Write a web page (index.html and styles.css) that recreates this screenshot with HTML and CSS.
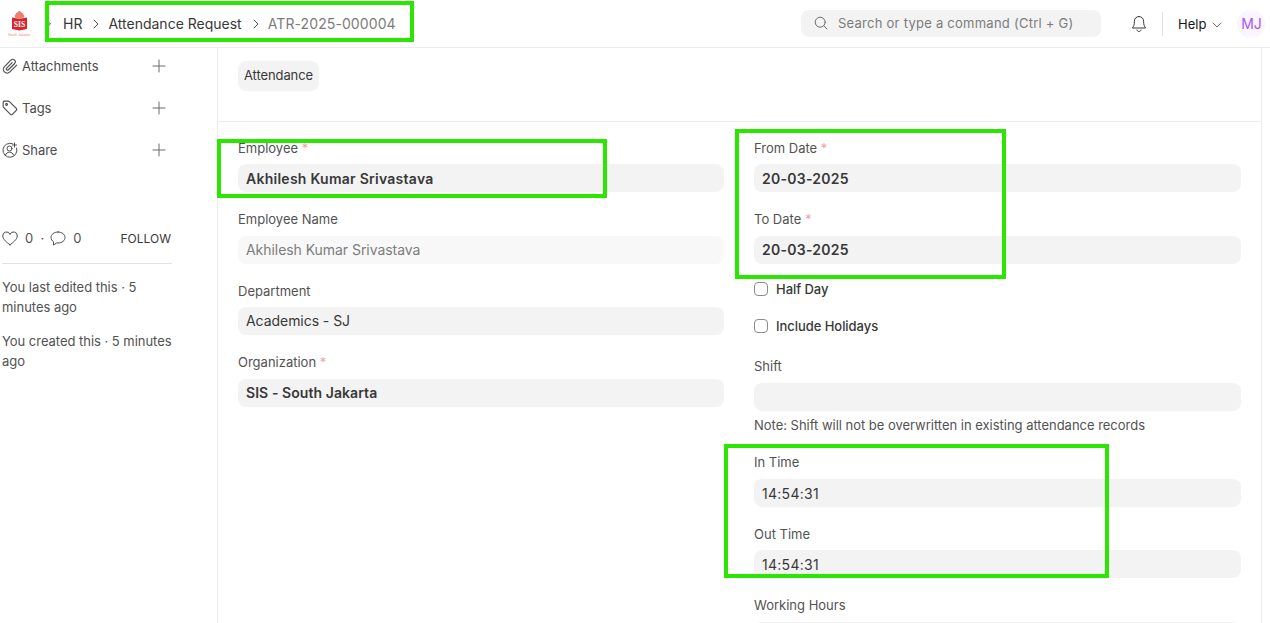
FILE: index.html
```html
<!DOCTYPE html>
<html lang="en">
<head>
<meta charset="utf-8">
<title>ATR-2025-000004</title>
<link rel="stylesheet" href="styles.css">
</head>
<body>
<header class="navbar">
  <div class="logo">
    <svg width="24" height="27" viewBox="0 0 24 27">
      <path d="M11.500 1c-1 0-1.500.8-2 1.500-1.200 0-2 1-1.800 2-1.200.5-1.400 1.800-.7 3l4.500 1 4.500-1c.7-1.200.5-2.500-.7-3 .2-1-.6-2-1.800-2C13 1.800 12.500 1 11.500 1z" fill="#ee7f6c"/>
      <path d="M4 7.500l7.500 1.200L19 7.500v11.500l-7.500 1.500L4 19z" fill="#d8262c"/>
      <text x="11.500" y="16.500" class="logo-mark">SIS</text>
      <text x="11" y="26" class="logo-sub">South Jakarta</text>
    </svg>
  </div>
  <nav class="crumbs">
    <svg class="crumb-sep first" width="6" height="8" viewBox="0 0 6 8"><path d="M1.500 1l3 3-3 3" class="stroke-dark"/></svg>
    <span class="crumb">HR</span>
    <svg class="crumb-sep" width="6" height="10" viewBox="0 0 6 10"><path d="M1 1l4 4-4 4" class="stroke-dark"/></svg>
    <span class="crumb">Attendance Request</span>
    <svg class="crumb-sep" width="6" height="10" viewBox="0 0 6 10"><path d="M1 1l4 4-4 4" class="stroke-dark"/></svg>
    <span class="crumb muted">ATR-2025-000004</span>
  </nav>
  <div class="search">
    <svg width="14" height="14" viewBox="0 0 14 14"><circle cx="6.200" cy="6.200" r="5" class="stroke-gray"/><path d="M10 10l3 3" class="stroke-gray"/></svg>
    <span>Search or type a command (Ctrl + G)</span>
  </div>
  <svg class="bell" width="16" height="18" viewBox="0 0 16 18"><path d="M8 1.500c-2.800 0-4.600 2.100-4.600 4.800 0 3.700-.9 5.200-2 6.700h13.200c-1.100-1.500-2-3-2-6.700C12.600 3.600 10.800 1.500 8 1.500z" class="stroke-ink"/><path d="M6 15c.3 1 1 1.500 2 1.500s1.700-.5 2-1.500" class="stroke-ink"/></svg>
  <span class="nav-divider"></span>
  <span class="help">Help</span>
  <svg class="help-caret" width="10" height="6" viewBox="0 0 10 6"><path d="M1 1l4 4 4-4" class="stroke-gray"/></svg>
  <span class="avatar">MJ</span>
</header>

<div class="page">
  <aside class="sidebar">
    <div class="side-row">
      <span class="side-label">
        <svg width="16" height="16" viewBox="2 1 14 14"><path d="M14.800 7.300l-5.900 5.900a3.300 3.300 0 0 1-4.700-4.700l5.800-5.800a2.200 2.200 0 0 1 3.100 3.100L7.400 11.500a1.100 1.100 0 0 1-1.500-1.500l5-5" class="stroke-dark"/></svg>
        Attachments
      </span>
      <svg class="plus" width="14" height="14" viewBox="0 0 14 14"><path d="M7 1v12M1 7h12" class="stroke-gray"/></svg>
    </div>
    <div class="side-row">
      <span class="side-label">
        <svg width="16" height="16" viewBox="1 1 14 14"><path d="M2 3.200C2 2.500 2.500 2 3.200 2h3.300c.4 0 .7.100 1 .4l6 6c.5.500.5 1.200 0 1.700l-3.400 3.400c-.5.500-1.200.500-1.700 0l-6-6C2.100 7.200 2 6.900 2 6.500z" class="stroke-dark"/><circle cx="5" cy="5" r=".8" class="stroke-dark"/></svg>
        Tags
      </span>
      <svg class="plus" width="14" height="14" viewBox="0 0 14 14"><path d="M7 1v12M1 7h12" class="stroke-gray"/></svg>
    </div>
    <div class="side-row">
      <span class="side-label">
        <svg width="16" height="16" viewBox="0 0 16 16"><path d="M10.500 1.700A7 7 0 1 0 14.600 6" class="stroke-dark"/><circle cx="7.500" cy="6.500" r="2.500" class="stroke-dark"/><path d="M3.300 13.200c.8-2 2.300-3 4.200-3s3.400 1 4.200 3M12.500 1v4M10.500 3h4" class="stroke-dark"/></svg>
        Share
      </span>
      <svg class="plus" width="14" height="14" viewBox="0 0 14 14"><path d="M7 1v12M1 7h12" class="stroke-gray"/></svg>
    </div>
    <div class="stats">
      <svg width="16" height="15" viewBox="0 0 16 15"><path d="M8 13.800C5 11.500.8 8.500.8 5A3.700 3.700 0 0 1 8 3.500 3.700 3.700 0 0 1 15.200 5c0 3.500-4.200 6.500-7.200 8.800z" class="stroke-dark"/></svg>
      <span class="count">0</span>
      <span class="dot">·</span>
      <svg width="16" height="15" viewBox="0 0 16 15"><path d="M8 1C4 1 1 3.400 1 6.500c0 1.800 1 3.300 2.600 4.300L3.500 14l3.300-2.100c.4.100.8.100 1.200.100 4 0 7-2.400 7-5.500S12 1 8 1z" class="stroke-dark"/></svg>
      <span class="count">0</span>
      <span class="follow">FOLLOW</span>
    </div>
    <div class="activity">
      <p>You last edited this · 5 minutes ago</p>
      <p>You created this · 5 minutes ago</p>
    </div>
  </aside>

  <main class="content">
    <div class="tabs"><span class="tab">Attendance</span></div>
    <div class="columns">
      <section class="col">
        <div class="field"><label>Employee <i>*</i></label><div class="control strong lower">Akhilesh Kumar Srivastava</div></div>
        <div class="field"><label>Employee Name</label><div class="control disabled">Akhilesh Kumar Srivastava</div></div>
        <div class="field"><label>Department</label><div class="control">Academics - SJ</div></div>
        <div class="field"><label>Organization <i>*</i></label><div class="control strong tight">SIS - South Jakarta</div></div>
      </section>
      <section class="col">
        <div class="field"><label>From Date <i>*</i></label><div class="control strong lower">20-03-2025</div></div>
        <div class="field before-check"><label>To Date <i>*</i></label><div class="control strong">20-03-2025</div></div>
        <div class="check"><span class="box"></span>Half Day</div>
        <div class="check last"><span class="box"></span>Include Holidays</div>
        <div class="field before-note"><label>Shift</label><div class="control"></div></div>
        <p class="note">Note: Shift will not be overwritten in existing attendance records</p>
        <div class="field"><label>In Time</label><div class="control time lower">14:54:31</div></div>
        <div class="field"><label>Out Time</label><div class="control time lower">14:54:31</div></div>
        <div class="field"><label>Working Hours</label><div class="control"></div></div>
      </section>
    </div>
  </main>
</div>

<div class="mark mark-crumbs"></div>
<div class="mark mark-employee"></div>
<div class="mark mark-dates"></div>
<div class="mark mark-times"></div>
</body>
</html>
```
FILE: styles.css
```css
* { box-sizing: border-box; }
html, body { height: 623px; overflow: hidden; }
body {
  margin: 0;
  position: relative;
  background: #fff;
  color: #383838;
  font-family: Inter, "Noto Sans", sans-serif;
  font-size: 13px;
}
svg { display: block; flex: none; fill: none; }
.stroke-ink { fill: none; stroke: #383838; stroke-width: 1; stroke-linecap: round; stroke-linejoin: round; }
.stroke-dark { fill: none; stroke: #4c4c4c; stroke-width: 1; stroke-linecap: round; stroke-linejoin: round; }
.stroke-gray { fill: none; stroke: #6b6b6b; stroke-width: 1; stroke-linecap: round; stroke-linejoin: round; }

.navbar {
  display: flex;
  align-items: center;
  height: 48px;
  border-bottom: 1px solid #ededed;
  padding-left: 8px;
}
.logo { width: 38px; }
.logo-mark { fill: #fff; font-family: "Liberation Serif", serif; font-size: 7.500px; font-weight: 700; text-anchor: middle; }
.logo-sub { fill: #ee8a84; font-family: "Liberation Sans", sans-serif; font-size: 3.600px; text-anchor: middle; }
.crumbs { display: flex; align-items: center; width: 755px; font-size: 14px; color: #383838; }
.crumb-sep { margin: 0 9px 0 11px; }
.crumb-sep.first { margin: 0 11px 0 0; }
.crumb.muted { color: #7c7c7c; letter-spacing: .1px; }
.search {
  display: flex;
  align-items: center;
  gap: 10px;
  width: 300px;
  height: 27px;
  padding: 0 0 1px 13px;
  border-radius: 8px;
  background: #f3f3f3;
  color: #7c7c7c;
  letter-spacing: .25px;
}
.bell { margin-left: 30px; }
.nav-divider { width: 1px; height: 24px; margin: 0 15px 0 15px; background: #e2e2e2; }
.help { color: #171717; }
.help-caret { margin: 2px 0 0 6px; }
.avatar {
  display: flex;
  align-items: center;
  justify-content: center;
  width: 28px;
  height: 28px;
  margin-left: 15px;
  border-radius: 50%;
  background: #faf5ff;
  color: #a855f7;
  font-size: 14px;
  letter-spacing: -.2px;
}

.page { display: flex; height: 575px; }
.sidebar { width: 218px; flex: none; border-right: 1px solid #ededed; padding: 8px 45px 0 2px; }
.side-row { display: flex; align-items: center; justify-content: space-between; height: 20px; margin-bottom: 22px; }
.side-label { display: flex; align-items: center; gap: 4px; color: #4c4c4c; letter-spacing: -.05px; }
.plus { margin-right: 6px; }
.stats {
  display: flex;
  align-items: center;
  height: 30px;
  margin-top: 63px;
  padding-right: 1px;
  color: #525252;
  letter-spacing: .2px;
}
.count { margin-left: 7px; }
.dot { margin: 0 6px 0 7px; }
.follow { margin-left: auto; font-size: 12px; color: #383838; letter-spacing: 0; }
.activity { border-top: 1px solid #e2e2e2; margin-top: 10px; padding-top: 13px; width: 170px; color: #525252; line-height: 20px; letter-spacing: -.03px; }
.activity p { margin: 0 -4px 14px 0; }

.content { width: 1044px; flex: none; border-right: 1px solid #ededed; }
.tabs { height: 74px; padding: 13px 20px 0; border-bottom: 1px solid #ededed; }
.tab { display: inline-flex; align-items: center; height: 30px; padding: 0 6px 2px; border-radius: 8px; background: #f3f3f3; letter-spacing: -.1px; }
.columns { display: grid; grid-template-columns: 486px 487px; gap: 30px; padding: 15.750px 20px 0; }
.field { margin-bottom: 17.250px; }
.field label { display: block; height: 20px; margin-bottom: 6.250px; line-height: 20px; color: #525252; }
.field label i { font-style: normal; color: #f0a3a3; }
.control { height: 28px; padding: 0 8px; border-radius: 8px; background: #f3f3f3; font-size: 14px; line-height: 28px; letter-spacing: -.05px; }
.control.lower { line-height: 29px; }
.control.strong { font-weight: 600; letter-spacing: .26px; }
.control.strong.tight { letter-spacing: .07px; }
.control.time { letter-spacing: .28px; }
.control.disabled { background: #f8f8f8; color: #7c7c7c; }
.before-check { margin-bottom: 15.500px; }
.before-note { margin-bottom: 4.500px; }
.check { display: flex; align-items: center; height: 20px; margin-bottom: 17px; font-weight: 500; letter-spacing: -.05px; }
.check.last { margin-bottom: 20.250px; }
.box { width: 14px; height: 14px; margin-right: 8px; border: 1px solid #8c8c8c; border-radius: 4px; background: #fff; }
.note { height: 20px; margin: 0 0 17.250px; line-height: 20px; color: #525252; letter-spacing: -.02px; }

.mark { position: absolute; border: 4px solid #2ae600; }
.mark-crumbs { left: 45px; top: 1px; width: 369px; height: 41px; }
.mark-employee { left: 217px; top: 139px; width: 390px; height: 59px; }
.mark-dates { left: 735px; top: 129px; width: 271px; height: 150px; }
.mark-times { left: 724px; top: 444px; width: 385px; height: 134px; }
```
